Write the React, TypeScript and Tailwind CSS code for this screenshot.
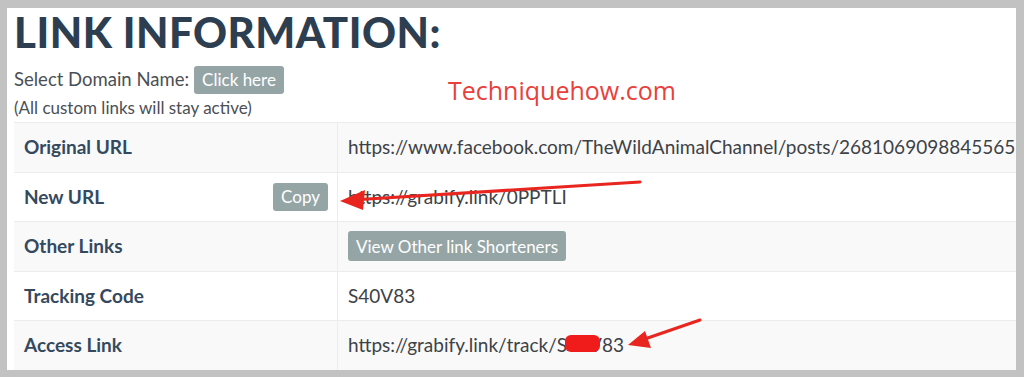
const rows = [
  { label: "Original URL", kind: "text", value: "https://www.facebook.com/TheWildAnimalChannel/posts/2681069098845565" },
  { label: "New URL", kind: "copy", value: "https://grabify.link/0PPTLI" },
  { label: "Other Links", kind: "button", value: "View Other link Shorteners" },
  { label: "Tracking Code", kind: "text", value: "S40V83" },
  { label: "Access Link", kind: "access", value: "" },
];

export default function App() {
  return (
    <div className="h-[377px] w-[1024px] bg-[#c2c2c2] pt-[8px] pl-[7px] pr-[8px] pb-[7px]" style={{ fontFamily: "Lato, 'Liberation Sans', sans-serif" }}>
      <div className="relative h-full w-full overflow-hidden bg-white pl-[7px]">
        <h1 className="h-[48px] text-[42px] font-black leading-[48px] tracking-[0.5px] text-[#2c3e50]">LINK INFORMATION:</h1>
        <div className="mt-[10px] flex h-[28px] items-center gap-[5px] text-[18.5px] text-[#4a4f55]">
          <span>Select Domain Name:</span>
          <span className="flex h-[28px] items-center rounded-[3px] bg-[#95a5a6] px-[8px] text-[17px] text-white">Click here</span>
        </div>
        <div className="mt-[4px] h-[20px] text-[17px] leading-[20px] text-[#4a4f55]">(All custom links will stay active)</div>
        <div className="absolute left-[441px] top-[64px] text-[25px] text-[#e8413c]" style={{ fontFamily: "'Open Sans', sans-serif" }}>Techniquehow.com</div>

        <div className="mt-[4px] text-[19px]">
          {rows.map((r, i) => (
            <div key={r.label} className={`flex h-[49.6px] border-t border-[#ececec] ${i % 2 === 0 ? "bg-[#f9f9f9]" : "bg-white"}`}>
              <div className="flex w-[324px] items-center justify-between border-r border-[#ececec] pl-[10px] pr-[9px] font-bold text-[#34495e]">
                <span>{r.label}</span>
                {r.kind === "copy" && (
                  <span className="flex h-[28px] items-center rounded-[3px] bg-[#95a5a6] px-[8px] text-[17px] font-normal text-white">Copy</span>
                )}
              </div>
              <div className="flex flex-1 items-center whitespace-nowrap pl-[10px] text-[#3d4247]">
                {r.kind === "button" ? (
                  <span className="flex h-[30px] items-center rounded-[3px] bg-[#95a5a6] px-[8px] text-[17px] text-white">{r.value}</span>
                ) : r.kind === "access" ? (
                  <span className="relative">
                    https://grabify.link/track/S40V83
                    <span className="absolute left-[217px] top-[4px] h-[17px] w-[35px] rounded-[6px] bg-[#f01c1c]" />
                  </span>
                ) : (
                  <span>{r.value}</span>
                )}
              </div>
            </div>
          ))}
        </div>

        <svg className="absolute left-0 top-0" width="1010" height="362" viewBox="0 0 1010 362">
          <line x1="633" y1="174" x2="345" y2="192" stroke="#e8261f" strokeWidth="3" strokeLinecap="round" />
          <polygon points="333,193 358,182 356,202" fill="#e8261f" />
          <line x1="693" y1="312" x2="632" y2="333" stroke="#e8261f" strokeWidth="3" strokeLinecap="round" />
          <polygon points="621,337 638,323 644,340" fill="#e8261f" />
        </svg>
      </div>
    </div>
  );
}
